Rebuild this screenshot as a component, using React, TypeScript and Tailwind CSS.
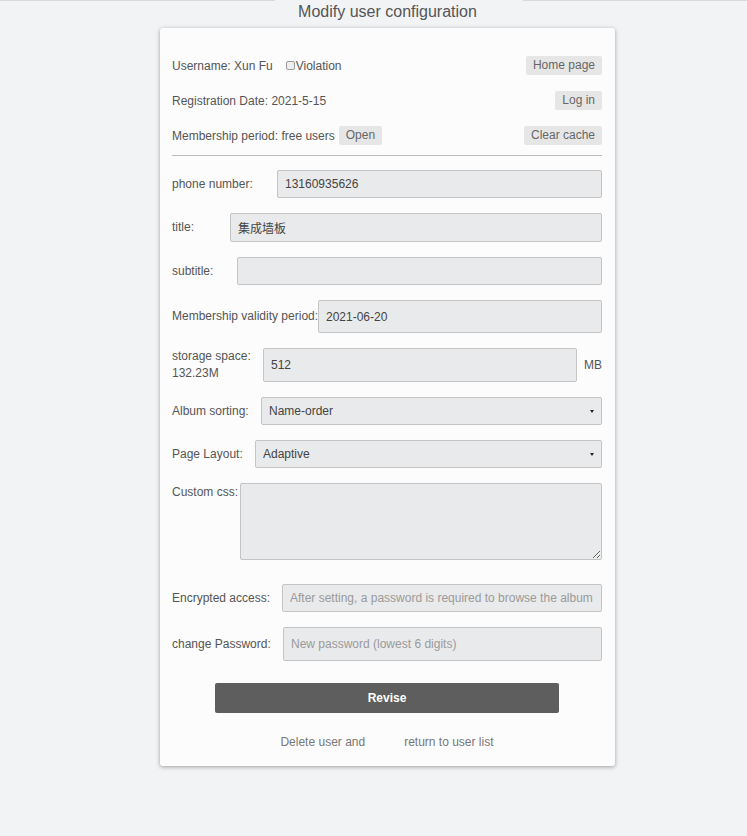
import React from 'react';

const font = { fontFamily: '"Liberation Sans", Arial, "Noto Sans CJK SC", sans-serif' };

const inputCls =
  'h-[28px] flex-1 min-w-0 rounded-[2px] border border-[#c4c4c4] bg-[#e9eaeb] px-[7px] text-[12px] text-[#444] placeholder:text-[#9a9a9a] outline-none';

const SmallBtn = ({ children }: { children: React.ReactNode }) => (
  <button className="h-[19px] rounded-[2px] bg-[#e6e6e6] px-[7px] text-[12px] leading-[19px] text-[#666]">
    {children}
  </button>
);

const Field = ({
  label,
  labelW,
  children,
}: {
  label: React.ReactNode;
  labelW: string;
  children: React.ReactNode;
}) => (
  <div className="flex items-center">
    <div className={`${labelW} shrink-0 whitespace-nowrap text-[12px] leading-[17px] text-[#555]`}>{label}</div>
    {children}
  </div>
);

const Select = ({ value }: { value: string }) => (
  <div className="relative flex flex-1">
    <select
      defaultValue={value}
      className="h-[28px] flex-1 appearance-none rounded-[2px] border border-[#c4c4c4] bg-[#e9eaeb] px-[7px] text-[12px] text-[#444] outline-none"
    >
      <option>{value}</option>
    </select>
    <span className="pointer-events-none absolute right-[8px] top-[13px] h-0 w-0 border-x-[2.5px] border-t-[3px] border-x-transparent border-t-[#222]" />
  </div>
);

export default function App() {
  return (
    <div className="min-h-screen bg-[#f2f3f5]" style={font}>
      <div className="flex h-px">
        <div className="w-[275px] bg-[#d9d9d9]" />
        <div className="w-[248px]" />
        <div className="flex-1 bg-[#d9d9d9]" />
      </div>
      <div className="pl-[28px]">
        <h1 className="pt-[1px] text-center text-[16px] leading-[19px] text-[#555]">Modify user configuration</h1>
        <div className="mx-auto mt-[7px] w-[455px] rounded-[3px] bg-[#fcfcfc] pb-[17px] pl-[12px] pr-[13px] pt-[28px] shadow-[0_1px_4px_rgba(0,0,0,0.35)]">
          <div className="flex flex-col gap-[16px]">
            <div className="flex h-[19px] items-center justify-between text-[12px] text-[#555]">
              <div className="flex items-center">
                <span>Username: Xun Fu</span>
                <span className="ml-[13px] inline-block h-[9px] w-[9px] rounded-[2px] border border-[#999] bg-[#eee]" />
                <span className="ml-[1px]">Violation</span>
              </div>
              <SmallBtn>Home page</SmallBtn>
            </div>
            <div className="flex h-[19px] items-center justify-between text-[12px] text-[#555]">
              <span>Registration Date: 2021-5-15</span>
              <SmallBtn>Log in</SmallBtn>
            </div>
            <div className="flex h-[19px] items-center justify-between text-[12px] text-[#555]">
              <div className="flex items-center gap-[4px]">
                <span>Membership period: free users</span>
                <SmallBtn>Open</SmallBtn>
              </div>
              <SmallBtn>Clear cache</SmallBtn>
            </div>
          </div>
          <div className="mt-[10px] h-px bg-[#bcbcbc]" />

          <div className="mt-[14px] flex flex-col gap-[15px]">
            <Field label="phone number:" labelW="w-[105px]">
              <input className={inputCls} defaultValue="13160935626" />
            </Field>
            <Field label="title:" labelW="w-[58px]">
              <input className={`${inputCls} !h-[29px]`} defaultValue="集成墙板" />
            </Field>
            <Field label="subtitle:" labelW="w-[65px]">
              <input className={inputCls} defaultValue="" />
            </Field>
            <Field label="Membership validity period:" labelW="w-[146px]">
              <input className={`${inputCls} !h-[33px]`} defaultValue="2021-06-20" />
            </Field>
            <Field
              label={
                <>
                  storage space:
                  <br />
                  132.23M
                </>
              }
              labelW="w-[91px]"
            >
              <input className={`${inputCls} !h-[34px]`} defaultValue="512" />
              <span className="ml-[7px] text-[12px] text-[#555]">MB</span>
            </Field>
            <Field label="Album sorting:" labelW="w-[89px]">
              <Select value="Name-order" />
            </Field>
            <Field label="Page Layout:" labelW="w-[83px]">
              <Select value="Adaptive" />
            </Field>
            <div className="flex items-start">
              <div className="w-[68px] shrink-0 whitespace-nowrap pt-[1px] text-[12px] leading-[17px] text-[#555]">Custom css:</div>
              <textarea className="h-[77px] flex-1 rounded-[2px] border border-[#c4c4c4] bg-[#e9eaeb] px-[7px] text-[12px] text-[#444] outline-none" />
            </div>
          </div>

          <div className="mt-[24px] flex flex-col gap-[15px]">
            <Field label="Encrypted access:" labelW="w-[110px]">
              <input
                className={inputCls}
                placeholder="After setting, a password is required to browse the album"
              />
            </Field>
            <Field label="change Password:" labelW="w-[111px]">
              <input className={`${inputCls} !h-[34px]`} placeholder="New password (lowest 6 digits)" />
            </Field>
          </div>

          <div className="mt-[22px] flex justify-center">
            <button className="h-[30px] w-[344px] rounded-[2px] bg-[#5e5e5e] text-[12px] font-bold text-white">
              Revise
            </button>
          </div>

          <div className="mt-[22px] flex justify-center gap-[39px] text-[12px] leading-[14px] text-[#777]">
            <span>Delete user and</span>
            <span>return to user list</span>
          </div>
        </div>
      </div>
    </div>
  );
}
